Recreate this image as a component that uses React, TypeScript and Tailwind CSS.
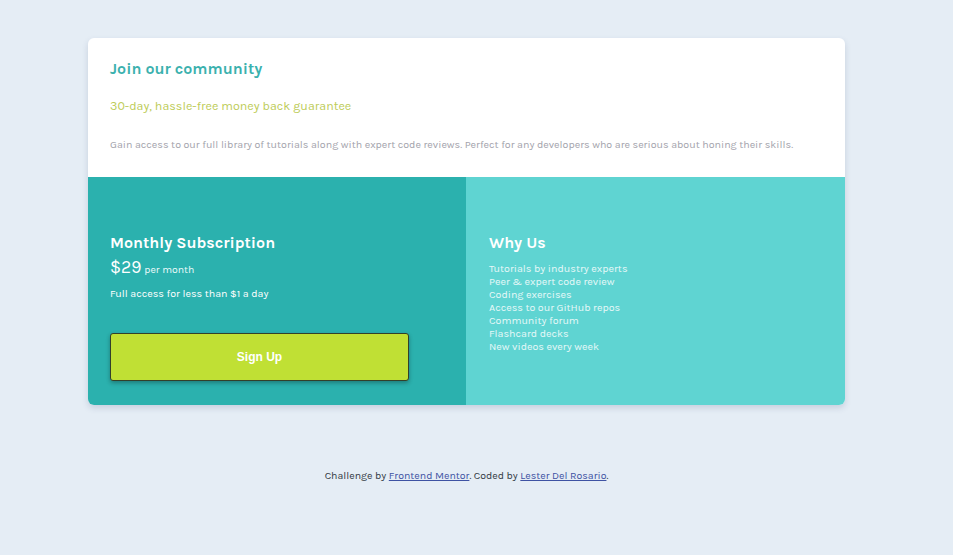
const features = [
  "Tutorials by industry experts",
  "Peer & expert code review",
  "Coding exercises",
  "Access to our GitHub repos",
  "Community forum",
  "Flashcard decks",
  "New videos every week",
];

export default function App() {
  return (
    <div className="min-h-[555px] w-full bg-[#e5edf5] pt-[38px] font-['Karla','Lato','Liberation_Sans',sans-serif]">
      {/* card */}
      <div className="ml-[88px] w-[757px] overflow-hidden rounded-[6px] bg-white shadow-[0_3px_6px_rgba(60,80,120,0.18)]">
        <div className="h-[139px] px-[22px] pt-[21px]">
          <h1 className="text-[16px] leading-[20px] font-bold text-[#3bb1ae]">Join our community</h1>
          <p className="mt-[19px] text-[12.5px] leading-[17px] text-[#bdcc58]">30-day, hassle-free money back guarantee</p>
          <p className="mt-[23px] text-[10.7px] leading-[14px] text-[#a3a3ac]">
            Gain access to our full library of tutorials along with expert code reviews. Perfect for any developers who are serious about honing their skills.
          </p>
        </div>
        <div className="flex h-[228px]">
          <div className="w-[378px] bg-[#2bb1ae] px-[22px] pt-[56px] text-white">
            <h2 className="text-[16px] leading-[19px] font-bold">Monthly Subscription</h2>
            <div className="mt-[5px] flex items-baseline gap-[3px]">
              <span className="text-[17.5px] leading-[20px]">$29</span>
              <span className="text-[10.5px] text-[#eafafa]">per month</span>
            </div>
            <p className="mt-[9px] text-[10.7px] leading-[14px]">Full access for less than $1 a day</p>
            <button className="mt-[32px] h-[48px] w-[299px] rounded-[3px] border border-[#33402a] bg-[#c0e034] font-['Liberation_Sans',Arial,sans-serif] text-[12px] font-bold text-white shadow-[0_2px_4px_rgba(0,0,0,0.3)]">
              Sign Up
            </button>
          </div>
          <div className="flex-1 bg-[#5fd4d2] px-[23px] pt-[56px] text-white">
            <h2 className="text-[16px] leading-[19px] font-bold">Why Us</h2>
            <ul className="mt-[10px] text-[10.7px] leading-[13px] text-[#e6f8f8]">
              {features.map((f) => (
                <li key={f}>{f}</li>
              ))}
            </ul>
          </div>
        </div>
      </div>
      <p className="ml-[88px] mt-[64px] w-[757px] text-center text-[10.6px] leading-[13px] text-[#333a44]">
        Challenge by{" "}
        <a href="#" className="text-[#3e52a3] underline">
          Frontend Mentor
        </a>
        . Coded by{" "}
        <a href="#" className="text-[#3e52a3] underline">
          Lester Del Rosario
        </a>
        .
      </p>
    </div>
  );
}
